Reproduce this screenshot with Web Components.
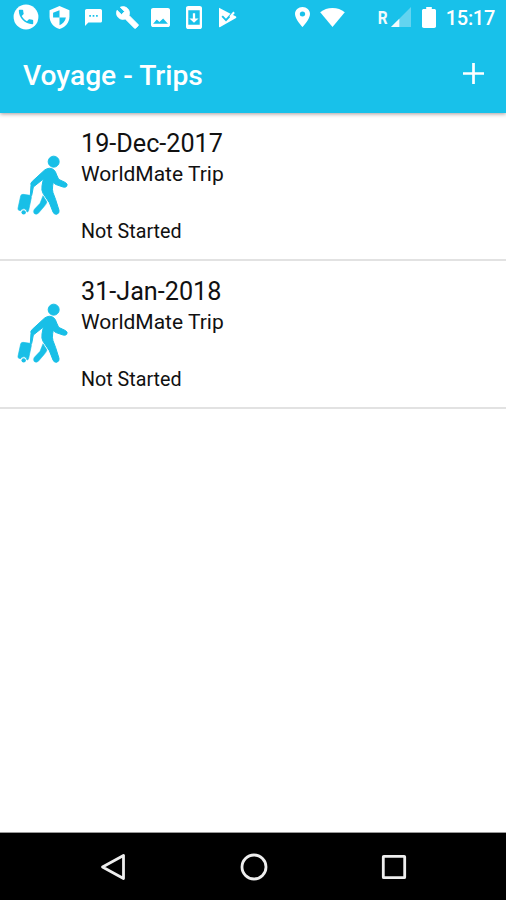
<!DOCTYPE html>
<html lang="en">
<head>
<meta charset="utf-8">
<title>Voyage - Trips</title>
<style>
  body {
    margin: 0;
    background: #fff;
    font-family: Roboto, "Liberation Sans", sans-serif;
  }
</style>
</head>
<body>
<voyage-screen>
  <status-bar slot="top" time="15:17"></status-bar>
  <app-bar slot="top">Voyage - Trips</app-bar>
  <trip-row>
    <span slot="date">19-Dec-2017</span>
    <span slot="name">WorldMate Trip</span>
    <span slot="state">Not Started</span>
  </trip-row>
  <trip-row>
    <span slot="date">31-Jan-2018</span>
    <span slot="name">WorldMate Trip</span>
    <span slot="state">Not Started</span>
  </trip-row>
  <nav-bar slot="bottom"></nav-bar>
</voyage-screen>

<script>
// name: [width, height, viewBox, markup]
const icons = {
  call: [26, 26, '0 0 26 26', `
    <circle cx="13" cy="13" r="12.4"/>
    <path fill="#18c1ea" transform="translate(3.4 3.4) scale(.8)" d="M6.62 10.79c1.44 2.83 3.76 5.14 6.59 6.59l2.2-2.2c.27-.27.67-.36 1.02-.24 1.12.37 2.33.57 3.57.57.55 0 1 .45 1 1V20c0 .55-.45 1-1 1-9.39 0-17-7.61-17-17 0-.55.45-1 1-1h3.5c.55 0 1 .45 1 1 0 1.25.2 2.45.57 3.57.11.35.03.74-.25 1.02l-2.2 2.2z"/>`],
  shield: [21, 23, '2.5 1 19 22', `
    <path d="M12 1L3 5v6c0 5.55 3.84 10.74 9 12 5.16-1.26 9-6.45 9-12V5l-9-4z"/>
    <path fill="#18c1ea" d="M12 5L6.2 7.5V12H12zM12 12h5.8c-.5 3.5-2.900 6.200-5.800 7.300z"/>`],
  sms: [17, 17, '2 2 20 20', `
    <path d="M20 2H4c-1.1 0-2 .9-2 2v18l4-4h14c1.1 0 2-.9 2-2V4c0-1.1-.9-2-2-2zM9 11H7V9h2v2zm4 0h-2V9h2v2zm4 0h-2V9h2v2z"/>`],
  wrench: [23, 23, '.5 .5 23 23', `
    <path stroke="currentColor" stroke-width=".7" d="M22.7 19l-9.1-9.1c.9-2.3.4-5-1.5-6.9-2-2-5-2.4-7.4-1.3L9 6 6 9 1.6 4.7C.4 7.1.9 10.1 2.9 12.1c1.9 1.9 4.6 2.4 6.9 1.5l9.1 9.1c.4.4 1 .4 1.4 0l2.3-2.3c.5-.4.5-1.1.1-1.4z"/>`],
  image: [19, 19, '3 3 18 18', `
    <path d="M21 19V5c0-1.1-.9-2-2-2H5c-1.1 0-2 .9-2 2v14c0 1.1.9 2 2 2h14c1.1 0 2-.9 2-2zM8.5 14l2.5 2.2 3.5-3.200L19 18H5z"/>`],
  update: [16, 23, '5 1 14 22', `
    <path d="M17 1L7 1c-1.1 0-2 .9-2 2v18c0 1.1.9 2 2 2h10c1.1 0 2-.9 2-2V3c0-1.1-.9-2-2-2zM17 19H7V5h10v14zm-1-6h-3V8h-2v5H8l4 4 4-4z"/>`],
  store: [19, 21, '0 0 19 21', `
    <path d="M1 .8L12 6.5 17.6 9.3c1 .6 1 1.3 0 1.9L2.2 20c-.8.4-1.2.1-1.2-.6z"/>
    <path fill="none" stroke="#18c1ea" stroke-width="1.9" d="M4.2 9.2L8 13.2 16.8 3.5"/>
    <path d="M11.3 9.2L15.3 4.6 16.8 5.9 12.8 10.5z"/>`],
  pin: [15, 20, '5 2 14 20', `
    <path d="M12 2C8.13 2 5 5.13 5 9c0 5.25 7 13 7 13s7-7.75 7-13c0-3.87-3.13-7-7-7zm0 9.5a2.5 2.5 0 1 1 0-5 2.5 2.5 0 0 1 0 5z"/>`],
  wifi: [25, 19, '0 0 25 19', `
    <path d="M12.5 19L.2 4.2C3.6 1.5 7.8 0 12.5 0s8.9 1.5 12.3 4.2z"/>`],
  signal: [20, 20, '0 0 20 20', `
    <path opacity=".35" d="M20 0v20H0z"/><path d="M8.3 11.7V20H0z"/>`],
  battery: [14, 21, '7 2 10 20', `
    <path d="M15.67 4H14V2h-4v2H8.33C7.6 4 7 4.6 7 5.33v15.33C7 21.4 7.6 22 8.33 22h7.33c.74 0 1.34-.6 1.34-1.33V5.33C17 4.6 16.4 4 15.67 4z"/>`],
  plus: [21, 21, '0 0 21 21', `
    <path d="M9.15 0h2.7v9.15H21v2.7h-9.15V21h-2.7v-9.15H0v-2.7h9.15z"/>`],
  traveller: [51, 61, '52 77 153 183', `
    <g stroke="currentColor" stroke-width="3" stroke-linejoin="round">
      <circle cx="162" cy="97" r="16.5"/>
      <path d="M135 122Q150 112 162 121Q168 126 171 137L177 150L198 160Q205 165 201 171Q198 175 190 173L167 165Q163 162 161 158L159 169Q157 180 160 190L168 211L178 243Q180 252 171 255Q163 256 160 248L149 220L130 192Q125 183 127 170L131 149L106 169L101 173L96 199L92 198L94 168Q91 162 98 156Z"/>
      <path stroke-width="1.5" d="M130 199L142 218Q139 226 133 232L116 252Q109 258 103 252Q99 247 104 240L121 222Z"/>
      <path stroke-width="2" d="M70 195L91 198Q96 199 95 205L87 243Q86 248 82 248A10 10 0 0 0 63 244L58 243Q54 242 55 237L63 200Q64 195 70 195Z"/>
    </g>
    <circle cx="72" cy="249" r="6.5"/>`],
  back: [26, 28, '0 0 26 28', `
    <path fill="none" stroke="#eee" stroke-width="2.8" stroke-linejoin="round" d="M23.5 2.5v23L2.5 14z"/>`],
  home: [28, 28, '0 0 28 28', `
    <circle cx="14" cy="14" r="12" fill="none" stroke="#eee" stroke-width="2.8"/>`],
  recent: [26, 26, '0 0 26 26', `
    <rect x="2.3" y="2.3" width="21.4" height="21.4" rx=".5" fill="none" stroke="#eee" stroke-width="2.8"/>`],
};

class AppIcon extends HTMLElement {
  connectedCallback() {
    const [width, height, box, markup] = icons[this.getAttribute('name')];

    this.attachShadow({ mode: 'open' }).innerHTML = `
      <style>
        :host { display: block; flex: none; }
        svg { display: block; fill: currentColor; }
      </style>
      <svg width="${width}" height="${height}" viewBox="${box}" preserveAspectRatio="none">${markup}</svg>
    `;
  }
}

class StatusBar extends HTMLElement {
  connectedCallback() {
    this.attachShadow({ mode: 'open' }).innerHTML = `
      <style>
        :host {
          display: flex;
          justify-content: space-between;
          box-sizing: border-box;
          height: 34px;
          padding: 0 11px 0 12.5px;
          background: #18c1ea;
          color: #fff;
          z-index: 1;
        }
        div { display: flex; align-items: center; }
        .left { gap: 14px; }
        .left app-icon:first-child { margin-right: -4px; }
        .left app-icon:nth-child(2) { margin-right: 1px; }
        .left app-icon:nth-child(4) { margin-right: -1.5px; }
        .left app-icon:nth-child(5) { margin-right: 1.5px; }
        .left app-icon:nth-child(6) { margin-right: 2.5px; }
        .right { gap: 10px; }
        .roaming {
          display: flex;
          align-items: center;
          gap: 3px;
          margin-left: 22px;
          margin-right: 1px;
          font-size: 17.5px;
          font-weight: 700;
          opacity: .95;
        }
        .roaming span { transform: scaleX(.88); padding-top: 1px; }
        time {
          font-size: 20px;
          font-weight: 500;
          line-height: 34px;
          padding-top: 2px;
          letter-spacing: -.3px;
        }
      </style>
      <div class="left">
        <app-icon name="call"></app-icon>
        <app-icon name="shield"></app-icon>
        <app-icon name="sms"></app-icon>
        <app-icon name="wrench"></app-icon>
        <app-icon name="image"></app-icon>
        <app-icon name="update"></app-icon>
        <app-icon name="store"></app-icon>
      </div>
      <div class="right">
        <app-icon name="pin"></app-icon>
        <app-icon name="wifi"></app-icon>
        <div class="roaming"><span>R</span><app-icon name="signal"></app-icon></div>
        <app-icon name="battery"></app-icon>
        <time>${this.getAttribute('time')}</time>
      </div>
    `;
  }
}

class AppBar extends HTMLElement {
  connectedCallback() {
    this.attachShadow({ mode: 'open' }).innerHTML = `
      <style>
        :host {
          display: flex;
          align-items: center;
          justify-content: space-between;
          box-sizing: border-box;
          height: 79px;
          padding: 0 22.5px 0 23px;
          background: #18c1ea;
          color: #fff;
          box-shadow: 0 1px 4px rgba(60, 30, 30, .45);
        }
        h1 { margin: 0; padding-top: 4px; font-size: 28.2px; font-weight: 500; line-height: 34px; }
      </style>
      <h1><slot></slot></h1>
      <app-icon name="plus"></app-icon>
    `;
  }
}

class TripRow extends HTMLElement {
  connectedCallback() {
    this.attachShadow({ mode: 'open' }).innerHTML = `
      <style>
        :host {
          display: flex;
          box-sizing: border-box;
          height: 148px;
          padding: 16px 18px 0 17px;
          border-bottom: 2px solid #e2e2e2;
          color: #111;
        }
        app-icon { color: #18bfe7; margin: 26px 13px 0 0; }
        .date { font-size: 25.2px; line-height: 30px; }
        .name { font-size: 21px; line-height: 30px; }
        .state { font-size: 19.7px; line-height: 24px; margin-top: 31px; }
      </style>
      <app-icon name="traveller"></app-icon>
      <div>
        <div class="date"><slot name="date"></slot></div>
        <div class="name"><slot name="name"></slot></div>
        <div class="state"><slot name="state"></slot></div>
      </div>
    `;
  }
}

class NavBar extends HTMLElement {
  connectedCallback() {
    this.attachShadow({ mode: 'open' }).innerHTML = `
      <style>
        :host {
          display: grid;
          grid-template-columns: repeat(3, 140.5px);
          place-content: center;
          place-items: center;
          box-sizing: border-box;
          height: 68px;
          padding-left: 1px;
          border-top: 1px solid #999;
          background: #000;
        }
      </style>
      <app-icon name="back"></app-icon>
      <app-icon name="home"></app-icon>
      <app-icon name="recent"></app-icon>
    `;
  }
}

class VoyageScreen extends HTMLElement {
  connectedCallback() {
    this.attachShadow({ mode: 'open' }).innerHTML = `
      <style>
        :host { display: flex; flex-direction: column; height: 100vh; overflow: hidden; }
        main { flex: 1; }
      </style>
      <slot name="top"></slot>
      <main><slot></slot></main>
      <slot name="bottom"></slot>
    `;
  }
}

customElements.define('app-icon', AppIcon);
customElements.define('status-bar', StatusBar);
customElements.define('app-bar', AppBar);
customElements.define('trip-row', TripRow);
customElements.define('nav-bar', NavBar);
customElements.define('voyage-screen', VoyageScreen);
</script>
</body>
</html>
